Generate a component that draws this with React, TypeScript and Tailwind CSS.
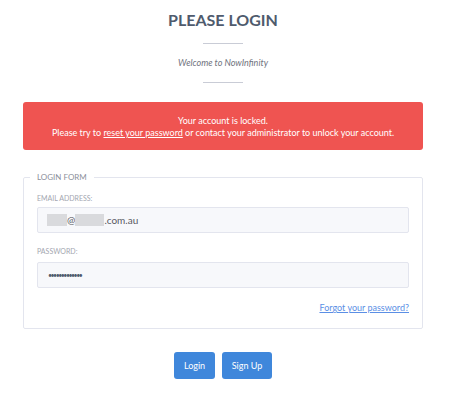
import React from 'react';

const App: React.FC = () => {
  return (
    <div className="w-[461px] h-[403px] bg-white font-['Lato','Open_Sans',sans-serif] text-[#575962]">
      <div className="w-[446px]">
        {/* Header */}
        <div className="flex flex-col items-center pt-[9px]">
          <h1 className="text-[16px] leading-[22px] font-bold text-[#4f5b6d]">PLEASE LOGIN</h1>
          <div className="w-[40px] h-px bg-[#c9ccd6] mt-[12px]" />
          <p className="mt-[12px] text-[9px] leading-[14px] italic text-[#6f727d]">Welcome to NowInfinity</p>
          <div className="w-[40px] h-px bg-[#c9ccd6] mt-[12px]" />
        </div>

        {/* Locked alert */}
        <div className="mx-[23px] mt-[19px] h-[48px] rounded-[3px] bg-[#ef5451] flex flex-col items-center justify-center pt-[2px] text-white text-[9px] leading-[12px]">
          <span>Your account is locked.</span>
          <span>
            Please try to <a className="underline">reset your password</a> or contact your administrator to unlock your account.
          </span>
        </div>

        {/* Login form */}
        <fieldset className="mx-[23px] mt-[22px] h-[157px] border border-[#e3e5ee] rounded-[2px] px-[13px] pt-[11px] pb-0">
          <legend className="ml-[-7px] px-[7px] text-[8px] leading-[10px] text-[#8c909b] uppercase">Login Form</legend>
          <label className="block text-[7px] leading-[10px] text-[#a3a6b0] uppercase">Email Address:</label>
          <div className="mt-[4px] h-[26px] bg-[#f7f8fb] border border-[#e3e5ee] rounded-[2px] flex items-center pl-[9px] text-[10px] text-[#575962]">
            <span className="inline-block w-[20px] h-[12px] bg-[#d9dadd]" />
            <span>@</span>
            <span className="inline-block w-[29px] h-[12px] bg-[#d9dadd]" />
            <span>.com.au</span>
          </div>
          <label className="block text-[7px] leading-[10px] text-[#a3a6b0] uppercase mt-[13px]">Password:</label>
          <div className="mt-[6px] h-[26px] bg-[#f7f8fb] border border-[#e3e5ee] rounded-[2px] flex items-center pl-[10px] text-[7px] tracking-[-1.5px] text-[#4f5b6d]">
            •••••••••••••
          </div>
          <div className="flex justify-end mt-[14px]">
            <a className="text-[9px] leading-[12px] text-[#5b8fe5] underline">Forgot your password?</a>
          </div>
        </fieldset>

        {/* Actions */}
        <div className="flex justify-center gap-[7px] mt-[23px]">
          <button className="w-[41px] h-[27px] rounded-[3px] bg-[#3f87db] text-white text-[9px]">Login</button>
          <button className="w-[50px] h-[27px] rounded-[3px] bg-[#3f87db] text-white text-[9px]">Sign Up</button>
        </div>
      </div>
    </div>
  );
};

export default App;
